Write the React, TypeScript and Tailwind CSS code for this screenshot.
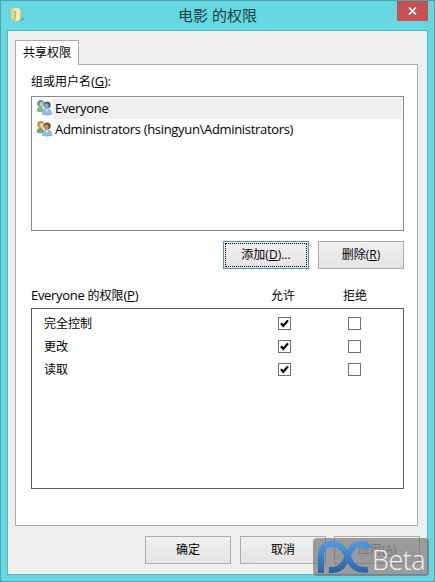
import React from "react";

const latin = "font-['Open_Sans','Noto_Sans_CJK_SC',sans-serif]";

function FolderIcon() {
  return (
    <svg width="16" height="16" viewBox="0 0 16 16" className="shrink-0">
      <defs>
        <linearGradient id="folder" x1="0" x2="1">
          <stop offset="0" stopColor="#f3dc8a" />
          <stop offset="0.5" stopColor="#fdf3c0" />
          <stop offset="1" stopColor="#e2c25c" />
        </linearGradient>
      </defs>
      <path d="M9 14.5 L14 13 L13 10.5 L10 10Z" fill="#3f9f9f" opacity="0.7" />
      <path d="M1 1.5 L5 0.5 L5 13 L1 12.5Z" fill="#ecd184" />
      <path d="M4 1 L9.5 1.5 L10 12.5 L5 14Z" fill="#f9eeba" />
      <path d="M4.5 4 L6.2 4 L6.2 12 L4.5 13.5Z" fill="#c9a95e" />
      <path d="M6 3.5 L10.8 2.5 L11.2 12.8 L5.5 14.4Z" fill="url(#folder)" />
    </svg>
  );
}

function PeopleIcon({ hair, face, shirt, frontHair, frontFace }: { hair: string; face: string; shirt: string; frontHair: string; frontFace: string }) {
  return (
    <svg width="17" height="17" viewBox="0 0 17 17" className="mt-px shrink-0">
      <path d="M0.8 12.6 Q0.4 8 4 7.8 Q8 7.8 8.2 12.6 Q4 14 0.8 12.6Z" fill={shirt} />
      <circle cx="4.8" cy="4.4" r="3.5" fill={hair} />
      <ellipse cx="5.6" cy="5.3" rx="2" ry="2.6" fill={face} />
      <path d="M6.4 15.3 Q6.4 10 10.8 10 Q15.8 10 16 15.3 Q11 17 6.4 15.3Z" fill="#8fbdea" stroke="#6b98c8" strokeWidth="0.5" />
      <path d="M9.4 10.3 L10.8 13 L12.2 10.3Z" fill="#edf5fc" />
      <circle cx="11.2" cy="6" r="3.5" fill={frontHair} />
      <ellipse cx="10.4" cy="7.2" rx="2.2" ry="2.8" fill={frontFace} />
    </svg>
  );
}

function Button({ children, focused = false }: { children: React.ReactNode; focused?: boolean }) {
  return (
    <div
      className={
        "flex h-7 w-[86px] shrink-0 items-center justify-center border bg-linear-to-b from-[#f0f0f0] to-[#e4e4e4] p-px " +
        (focused ? "border-[#4d93cf]" : "border-[#acacac]")
      }
    >
      <div className={"flex h-full w-full items-center justify-center whitespace-pre " + (focused ? "border border-dotted border-black" : "")}>
        {children}
      </div>
    </div>
  );
}

function Checkbox({ checked = false }: { checked?: boolean }) {
  return (
    <div className="h-[13px] w-[13px] border border-[#707070] bg-white">
      {checked && (
        <svg width="11" height="11" viewBox="0 0 11 11" className="block">
          <path d="M1.9 5.2 L4.3 7.8 L9 2.4" fill="none" stroke="#000" strokeWidth="2.2" />
        </svg>
      )}
    </div>
  );
}

function Watermark() {
  return (
    <div className="absolute top-[537px] left-[312px] flex h-[38px] w-[116px] rounded-[4px] bg-[#6e6e6e]/65">
      <svg width="60" height="38" viewBox="0 0 60 38" className="shrink-0">
        <defs>
          <linearGradient id="logo" x1="0" y1="0" x2="0" y2="1">
            <stop offset="0" stopColor="#4c97de" />
            <stop offset="1" stopColor="#2a66a6" />
          </linearGradient>
        </defs>
        <path d="M16 32 C30 33 32 24 36 15 Q40 6 48 6 Q54 6 56.5 10" fill="none" stroke="url(#logo)" strokeWidth="6" />
        <path d="M8 35 V18 Q8 6 19 6 C31 6 33 17 38 25 Q43 33 55 31.5" fill="none" stroke="url(#logo)" strokeWidth="6" />
      </svg>
      <span className="-ml-px pt-[3px] text-[27px] leading-[38px] font-light tracking-[-0.5px] text-[#f1f1f1] font-['Open_Sans',sans-serif]">Beta</span>
    </div>
  );
}

const permissions = ["完全控制", "更改", "读取"];

export default function App() {
  return (
    <div className={"relative flex h-[582px] w-[435px] flex-col border border-[#4aa5ac] bg-[#67d8e1] px-1.5 pb-1.5 text-[12px] leading-4 text-black " + latin}>
      <header className="relative flex h-[29px] shrink-0 items-center justify-center">
        <div className="absolute top-[6px] left-[3px]"><FolderIcon /></div>
        <h1 className="pb-px text-[15px] leading-5 font-normal text-[#173f44]">电影 的权限</h1>
        <div className="absolute top-0 right-0 flex h-5 w-[31px] items-center justify-center bg-[#c75050]">
          <svg width="9" height="8" viewBox="0 0 9 8"><path d="M1 .5 L8 7.5 M8 .5 L1 7.5" stroke="#fff" strokeWidth="1.7" /></svg>
        </div>
      </header>
      <main className="flex h-[545px] w-[421px] shrink-0 flex-col border border-[#55b5bd] bg-[#efefef] pt-[9px] pl-[7px]">
        <div className="z-10 flex h-[25px] w-16 shrink-0 items-center justify-center border border-b-0 border-[#acacac] bg-white pb-px">共享权限</div>
        <section className="-mt-px flex h-[462px] w-[403px] shrink-0 flex-col border border-[#acacac] bg-white px-[15px] pt-[9px]">
          <div className="h-[22px] shrink-0">组或用户名<span className="text-[13px] leading-3 tracking-[-0.2px]">(<u>G</u>):</span></div>
          <div className="flex h-[135px] w-[373px] shrink-0 flex-col border border-[#828790] p-px pl-1 text-[13px] tracking-[-0.32px]">
            <div className="flex h-[21px]">
              <PeopleIcon hair="#6f8f8b" face="#b9c9c4" shirt="#82b39c" frontHair="#456379" frontFace="#8fa6b4" />
              <span className="flex-1 bg-[#efefef] pl-0.5 leading-[21px]">Everyone</span>
            </div>
            <div className="flex h-[21px]">
              <PeopleIcon hair="#b58c4a" face="#efd0a0" shirt="#7ba36a" frontHair="#6f4a28" frontFace="#c48d5c" />
              <span className="pl-0.5 leading-[21px]">Administrators (hsingyun\Administrators)</span>
            </div>
          </div>
          <div className="mt-[10px] flex w-[373px] shrink-0 justify-end gap-[9px]">
            <Button focused>添加(<u>D</u>)...</Button>
            <Button>删除(<u>R</u>)</Button>
          </div>
          <div className="mt-[19px] flex h-5 shrink-0">
            <span className="w-[240px]"><span className="text-[13px] leading-3 tracking-[-0.32px]">Everyone </span>的权限<span className="text-[13px] leading-3 tracking-[-0.2px]">(<u>P</u>)</span></span>
            <span className="w-[72px]">允许</span>
            <span>拒绝</span>
          </div>
          <div className="flex h-[181px] w-[373px] shrink-0 flex-col border border-[#5a5a5a] pt-[3px] pl-3">
            {permissions.map((label) => (
              <div key={label} className="flex h-[23px] items-center">
                <span className="w-[234px]">{label}</span>
                <span className="w-[70px]"><Checkbox checked /></span>
                <Checkbox />
              </div>
            ))}
          </div>
        </section>
        <footer className="mt-[10px] ml-[130px] flex shrink-0 gap-[9px]">
          <Button>确定</Button>
          <Button>取消</Button>
          <span className="-ml-px text-[#838383]"><Button>应用(<u>A</u>)</Button></span>
        </footer>
      </main>
      <Watermark />
    </div>
  );
}
